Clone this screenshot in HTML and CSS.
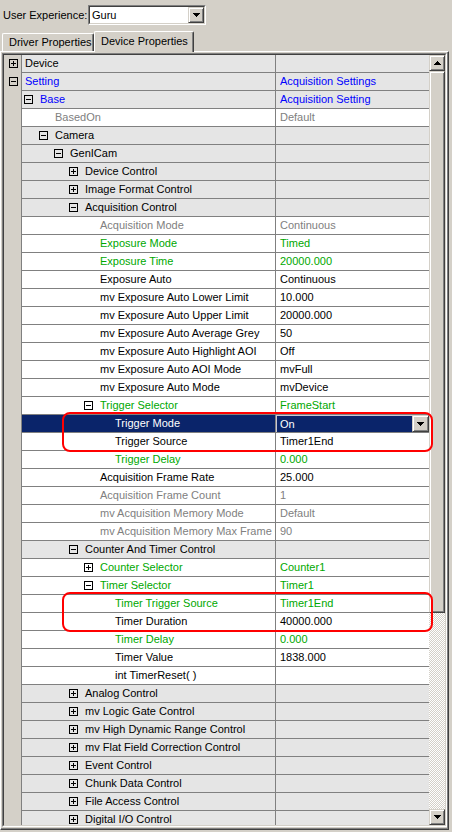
FILE: index.html
```html
<!DOCTYPE html>
<html>
<head>
<meta charset="utf-8">
<link rel="stylesheet" href="styles.css">
</head>
<body>
<svg class="defs" width="0" height="0">
  <defs>
    <symbol id="minus" viewBox="0 0 9 9"><rect x="0.5" y="0.5" width="8" height="8" fill="none" stroke="#000"/><rect x="2" y="4" width="5" height="1" fill="#000"/></symbol>
    <symbol id="plus" viewBox="0 0 9 9"><rect x="0.5" y="0.5" width="8" height="8" fill="none" stroke="#000"/><rect x="2" y="4" width="5" height="1" fill="#000"/><rect x="4" y="2" width="1" height="5" fill="#000"/></symbol>
    <symbol id="down" viewBox="0 0 7 4"><rect x="0" y="0" width="7" height="1"/><rect x="1" y="1" width="5" height="1"/><rect x="2" y="2" width="3" height="1"/><rect x="3" y="3" width="1" height="1"/></symbol>
    <symbol id="up" viewBox="0 0 7 4"><rect x="3" y="0" width="1" height="1"/><rect x="2" y="1" width="3" height="1"/><rect x="1" y="2" width="5" height="1"/><rect x="0" y="3" width="7" height="1"/></symbol>
  </defs>
</svg>

<div class="top">
  <span class="lbl">User Experience:</span>
  <div class="combo"><div class="combo-in"><span class="ctext">Guru</span><span class="btn3d cbtn"><svg class="arr" width="7" height="4"><use href="#down"/></svg></span></div></div>
</div>

<div class="tabs">
  <div class="tab">Driver Properties</div>
  <div class="tab sel">Device Properties</div>
</div>

<div class="page">
  <div class="grid-o"><div class="grid-i">
    <div class="list">
      <div class="row cat"><div class="mg"><svg class="bx" width="9" height="9"><use href="#plus"/></svg></div><div class="nm n0">Device</div><div class="vl"></div></div>
      <div class="row cat"><div class="mg"><svg class="bx" width="9" height="9"><use href="#minus"/></svg></div><div class="nm n0 blue">Setting</div><div class="vl blue">Acquisition Settings</div></div>
      <div class="row cat"><div class="mg"></div><div class="nm n1 blue"><svg class="bx" width="9" height="9"><use href="#minus"/></svg><span class="t">Base</span></div><div class="vl blue">Acquisition Setting</div></div>
      <div class="row"><div class="mg"></div><div class="nm f2 gray">BasedOn</div><div class="vl gray">Default</div></div>
      <div class="row cat"><div class="mg"></div><div class="nm n2"><svg class="bx" width="9" height="9"><use href="#minus"/></svg><span class="t">Camera</span></div><div class="vl"></div></div>
      <div class="row cat"><div class="mg"></div><div class="nm n3"><svg class="bx" width="9" height="9"><use href="#minus"/></svg><span class="t">GenICam</span></div><div class="vl"></div></div>
      <div class="row cat"><div class="mg"></div><div class="nm n4"><svg class="bx" width="9" height="9"><use href="#plus"/></svg><span class="t">Device Control</span></div><div class="vl"></div></div>
      <div class="row cat"><div class="mg"></div><div class="nm n4"><svg class="bx" width="9" height="9"><use href="#plus"/></svg><span class="t">Image Format Control</span></div><div class="vl"></div></div>
      <div class="row cat"><div class="mg"></div><div class="nm n4"><svg class="bx" width="9" height="9"><use href="#minus"/></svg><span class="t">Acquisition Control</span></div><div class="vl"></div></div>
      <div class="row"><div class="mg"></div><div class="nm f5 gray">Acquisition Mode</div><div class="vl gray">Continuous</div></div>
      <div class="row"><div class="mg"></div><div class="nm f5 green">Exposure Mode</div><div class="vl green">Timed</div></div>
      <div class="row"><div class="mg"></div><div class="nm f5 green">Exposure Time</div><div class="vl green">20000.000</div></div>
      <div class="row"><div class="mg"></div><div class="nm f5">Exposure Auto</div><div class="vl">Continuous</div></div>
      <div class="row"><div class="mg"></div><div class="nm f5">mv Exposure Auto Lower Limit</div><div class="vl">10.000</div></div>
      <div class="row"><div class="mg"></div><div class="nm f5">mv Exposure Auto Upper Limit</div><div class="vl">20000.000</div></div>
      <div class="row"><div class="mg"></div><div class="nm f5">mv Exposure Auto Average Grey</div><div class="vl">50</div></div>
      <div class="row"><div class="mg"></div><div class="nm f5">mv Exposure Auto Highlight AOI</div><div class="vl">Off</div></div>
      <div class="row"><div class="mg"></div><div class="nm f5">mv Exposure Auto AOI Mode</div><div class="vl">mvFull</div></div>
      <div class="row"><div class="mg"></div><div class="nm f5">mv Exposure Auto Mode</div><div class="vl">mvDevice</div></div>
      <div class="row"><div class="mg"></div><div class="nm n5 green"><svg class="bx" width="9" height="9"><use href="#minus"/></svg><span class="t">Trigger Selector</span></div><div class="vl green">FrameStart</div></div>
      <div class="row sel"><div class="mg"></div><div class="nm f6">Trigger Mode</div><div class="vl edit"><div class="efield">On</div><span class="btn3d ebtn"><svg class="arr" width="7" height="4"><use href="#down"/></svg></span></div></div>
      <div class="row"><div class="mg"></div><div class="nm f6">Trigger Source</div><div class="vl">Timer1End</div></div>
      <div class="row"><div class="mg"></div><div class="nm f6 green">Trigger Delay</div><div class="vl green">0.000</div></div>
      <div class="row"><div class="mg"></div><div class="nm f5">Acquisition Frame Rate</div><div class="vl">25.000</div></div>
      <div class="row"><div class="mg"></div><div class="nm f5 gray">Acquisition Frame Count</div><div class="vl gray">1</div></div>
      <div class="row"><div class="mg"></div><div class="nm f5 gray">mv Acquisition Memory Mode</div><div class="vl gray">Default</div></div>
      <div class="row"><div class="mg"></div><div class="nm f5 gray">mv Acquisition Memory Max Frame Count</div><div class="vl gray">90</div></div>
      <div class="row cat"><div class="mg"></div><div class="nm n4"><svg class="bx" width="9" height="9"><use href="#minus"/></svg><span class="t">Counter And Timer Control</span></div><div class="vl"></div></div>
      <div class="row"><div class="mg"></div><div class="nm n5 green"><svg class="bx" width="9" height="9"><use href="#plus"/></svg><span class="t">Counter Selector</span></div><div class="vl green">Counter1</div></div>
      <div class="row"><div class="mg"></div><div class="nm n5 green"><svg class="bx" width="9" height="9"><use href="#minus"/></svg><span class="t">Timer Selector</span></div><div class="vl green">Timer1</div></div>
      <div class="row"><div class="mg"></div><div class="nm f6 green">Timer Trigger Source</div><div class="vl green">Timer1End</div></div>
      <div class="row"><div class="mg"></div><div class="nm f6">Timer Duration</div><div class="vl">40000.000</div></div>
      <div class="row"><div class="mg"></div><div class="nm f6 green">Timer Delay</div><div class="vl green">0.000</div></div>
      <div class="row"><div class="mg"></div><div class="nm f6">Timer Value</div><div class="vl">1838.000</div></div>
      <div class="row"><div class="mg"></div><div class="nm f6">int TimerReset( )</div><div class="vl"></div></div>
      <div class="row cat"><div class="mg"></div><div class="nm n4"><svg class="bx" width="9" height="9"><use href="#plus"/></svg><span class="t">Analog Control</span></div><div class="vl"></div></div>
      <div class="row cat"><div class="mg"></div><div class="nm n4"><svg class="bx" width="9" height="9"><use href="#plus"/></svg><span class="t">mv Logic Gate Control</span></div><div class="vl"></div></div>
      <div class="row cat"><div class="mg"></div><div class="nm n4"><svg class="bx" width="9" height="9"><use href="#plus"/></svg><span class="t">mv High Dynamic Range Control</span></div><div class="vl"></div></div>
      <div class="row cat"><div class="mg"></div><div class="nm n4"><svg class="bx" width="9" height="9"><use href="#plus"/></svg><span class="t">mv Flat Field Correction Control</span></div><div class="vl"></div></div>
      <div class="row cat"><div class="mg"></div><div class="nm n4"><svg class="bx" width="9" height="9"><use href="#plus"/></svg><span class="t">Event Control</span></div><div class="vl"></div></div>
      <div class="row cat"><div class="mg"></div><div class="nm n4"><svg class="bx" width="9" height="9"><use href="#plus"/></svg><span class="t">Chunk Data Control</span></div><div class="vl"></div></div>
      <div class="row cat"><div class="mg"></div><div class="nm n4"><svg class="bx" width="9" height="9"><use href="#plus"/></svg><span class="t">File Access Control</span></div><div class="vl"></div></div>
      <div class="row cat"><div class="mg"></div><div class="nm n4"><svg class="bx" width="9" height="9"><use href="#plus"/></svg><span class="t">Digital I/O Control</span></div><div class="vl"></div></div>
    </div>
    <div class="sb">
      <div class="btn3d sbtn"><svg class="arr" width="7" height="4"><use href="#up"/></svg></div>
      <div class="btn3d thumb"></div>
      <div class="track"></div>
      <div class="btn3d sbtn"><svg class="arr" width="7" height="4"><use href="#down"/></svg></div>
    </div>
  </div></div>
</div>

<div class="hl hl1"></div>
<div class="hl hl2"></div>
</body>
</html>
```

FILE: styles.css
```css
* { box-sizing: border-box; }
html, body { margin: 0; padding: 0; }
body {
  width: 452px;
  height: 832px;
  overflow: hidden;
  position: relative;
  background: #d4d0c8;
  font-family: "Liberation Sans", Arial, sans-serif;
  font-size: 11px;
  color: #000;
}
.defs { position: absolute; width: 0; height: 0; }

/* top bar */
.top {
  height: 31px;
  display: flex;
  align-items: flex-start;
  padding: 5px 0 0 3px;
}
.lbl { width: 85px; line-height: 20px; }
.combo {
  width: 118px;
  height: 20px;
  border: 1px solid;
  border-color: #808080 #fff #fff #808080;
}
.combo-in {
  height: 18px;
  border: 1px solid;
  border-color: #404040 #d4d0c8 #d4d0c8 #404040;
  background: #fff;
  display: flex;
  align-items: center;
}
.ctext { flex: 1; padding-left: 2px; line-height: 16px; }

.btn3d {
  background: #d4d0c8;
  border: 1px solid;
  border-color: #d4d0c8 #404040 #404040 #d4d0c8;
  box-shadow: inset 1px 1px #fff, inset -1px -1px #808080;
  display: flex;
  align-items: center;
  justify-content: center;
}
.cbtn { width: 16px; height: 16px; }
.arr { display: block; fill: #000; }

/* tabs */
.tabs {
  height: 20px;
  display: flex;
  align-items: flex-end;
  padding-left: 2px;
}
.tab {
  height: 18px;
  width: 92px;
  padding-left: 6px;
  line-height: 17px;
  border: 1px solid;
  border-bottom: none;
  border-color: #fff #404040 #fff #fff;
  box-shadow: inset -1px 0 #808080;
  border-radius: 2px 2px 0 0;
}
.tab.sel {
  width: 100px;
  height: 21px;
  margin-bottom: -1px;
  padding-left: 6px;
  line-height: 18px;
  position: relative;
  z-index: 1;
  background: #d4d0c8;
}

/* tab page */
.page {
  width: 449px;
  height: 779px;
  border: 1px solid;
  border-color: #fff #404040 #404040 #fff;
  padding: 1px;
  box-shadow: inset -1px -1px #808080;
}
.grid-o {
  width: 445px;
  height: 774px;
  border: 1px solid;
  border-color: #808080 #fff #fff #808080;
}
.grid-i {
  height: 772px;
  border: 1px solid;
  border-color: #404040 #d4d0c8 #d4d0c8 #404040;
  display: flex;
  background: #d4d0c8;
}
.list {
  width: 425px;
  height: 770px;
  overflow: hidden;
}
.row { display: flex; height: 18px; }
.mg {
  width: 18px;
  flex: none;
  border-right: 1px solid #808080;
  background: #d4d0c8;
  padding: 4px 0 0 5px;
}
.nm {
  width: 254px;
  flex: none;
  height: 18px;
  border-right: 1px solid #808080;
  border-bottom: 1px solid #808080;
  background: #fff;
  display: flex;
  align-items: center;
  white-space: nowrap;
  overflow: hidden;
  line-height: 17px;
}
.vl {
  width: 153px;
  flex: none;
  height: 18px;
  border-bottom: 1px solid #808080;
  background: #fff;
  padding-left: 4px;
  white-space: nowrap;
  overflow: hidden;
  line-height: 17px;
}
.cat .nm, .cat .vl { background: #e5e5e5; }
.bx { display: block; flex: none; }
.nm .bx { margin-right: 7px; }

.n0 { padding-left: 3px; }
.n1 { padding-left: 2px; }
.n2 { padding-left: 17px; }
.n3 { padding-left: 32px; }
.n4 { padding-left: 47px; }
.n5 { padding-left: 62px; }
.f2 { padding-left: 33px; }
.f5 { padding-left: 78px; }
.f6 { padding-left: 93px; }

.blue { color: #0000ff; }
.green { color: #00a800; }
.gray { color: #808080; }

.sel .nm { background: #0a246a; color: #fff; }
.vl.edit { padding: 0; display: flex; }
.efield {
  flex: 1;
  height: 17px;
  background: #0a246a;
  color: #fff;
  padding-left: 3px;
  line-height: 16px;
  border-top: 1px solid #c8c8d8;
  border-left: 1px solid #c8c8d8;
}
.ebtn { width: 17px; height: 17px; }

/* scrollbar */
.sb {
  width: 16px;
  height: 770px;
  display: flex;
  flex-direction: column;
}
.sbtn { width: 16px; height: 16px; flex: none; }
.thumb { width: 16px; height: 542px; flex: none; }
.track {
  flex: 1;
  background-color: #fff;
  background-image: repeating-conic-gradient(#d4d0c8 0 25%, #fff 0 50%);
  background-size: 2px 2px;
}

/* red highlight frames */
.hl {
  position: absolute;
  border: 2px solid #f00;
  border-radius: 8px;
  left: 62px;
  width: 371px;
  height: 40px;
}
.hl1 { top: 412px; }
.hl2 { top: 592px; }
```
